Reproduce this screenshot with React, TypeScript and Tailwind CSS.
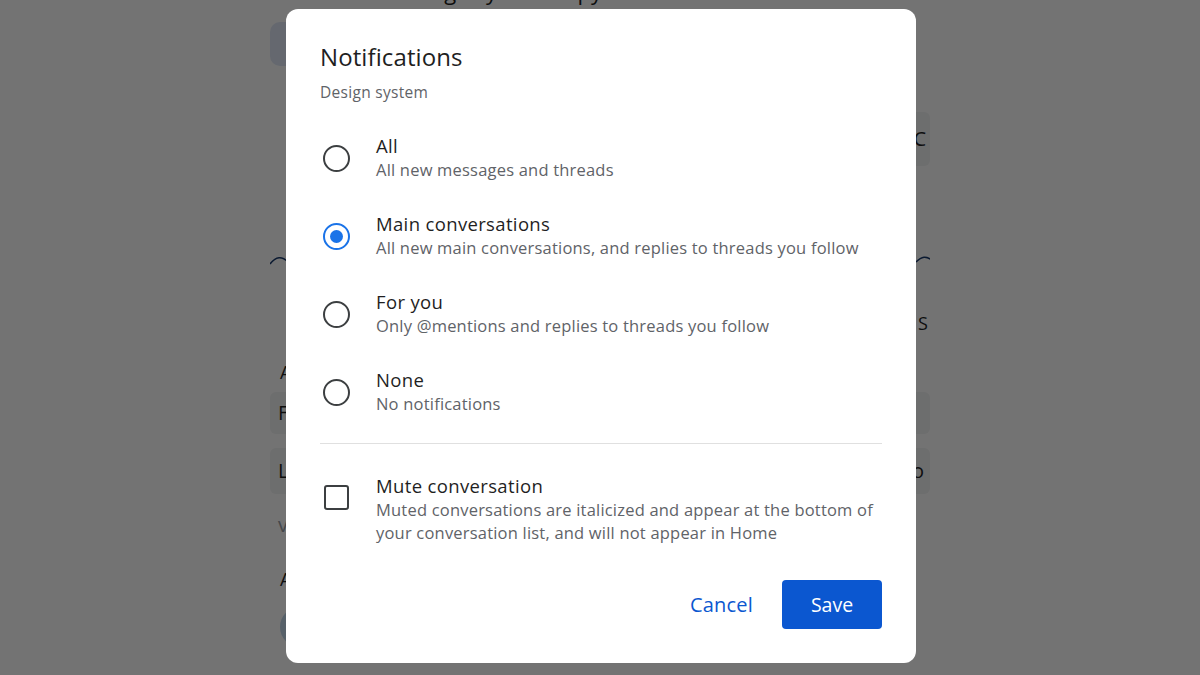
import React from "react";

const font = { fontFamily: '"Open Sans", "Noto Sans", sans-serif' };

function Radio({ checked }: { checked?: boolean }) {
  return (
    <div className="w-[32px] flex justify-center shrink-0">
      {checked ? (
        <div className="w-[27px] h-[27px] rounded-full border-[2.5px] border-[#1a73e8] flex items-center justify-center">
          <div className="w-[13px] h-[13px] rounded-full bg-[#1a73e8]" />
        </div>
      ) : (
        <div className="w-[27px] h-[27px] rounded-full border-[2.5px] border-[#3c3f41]" />
      )}
    </div>
  );
}

function Option({ label, desc, checked }: { label: string; desc: string; checked?: boolean }) {
  return (
    <div className="flex items-center gap-[24px]">
      <Radio checked={checked} />
      <div className="flex flex-col">
        <div className="text-[18.5px] leading-[24px] text-[#1f1f1f] tracking-[0.35px]">{label}</div>
        <div className="text-[16.5px] leading-[24px] text-[#5f6368] tracking-[0.2px]">{desc}</div>
      </div>
    </div>
  );
}

function Background() {
  return (
    <div className="mx-auto w-[660px] h-[675px] flex flex-col text-[#1f1f1f] text-[20px]" style={font}>
      <div className="-mt-[22px] h-[26px] pl-[130px] text-[22px] leading-[26px]">Design system copy</div>
      <div className="mt-[18px] flex justify-between">
        <div className="w-[120px] h-[44px] rounded-[10px] bg-[#dfe7f6]" />
      </div>
      <div className="mt-[46px] flex justify-end">
        <div className="w-[140px] h-[54px] bg-[#f1f3f4] rounded-[6px] flex items-center justify-end pr-[4px] text-[20px]">C</div>
      </div>
      <div className="mt-[88px]">
        <svg width="660" height="16" viewBox="0 0 660 16">
          <path d="M0 10 C 6 2, 12 2, 18 8 M646 8 C 652 2, 656 2, 662 6" stroke="#1a3a6e" strokeWidth="1.5" fill="none" />
        </svg>
      </div>
      <div className="mt-[40px] flex justify-end pr-[2px] text-[18px]">, S</div>
      <div className="mt-[22px] pl-[10px] text-[18px]">A</div>
      <div className="mt-[6px] h-[42px] rounded-[6px] bg-[#f1f3f4] flex items-center pl-[8px]">F</div>
      <div className="mt-[14px] h-[46px] rounded-[6px] bg-[#f1f3f4] flex items-center justify-between pl-[8px] pr-[6px]">
        <span>L</span>
        <span>o</span>
      </div>
      <div className="mt-[16px] pl-[8px] text-[#9aa0a6]">v</div>
      <div className="mt-[26px] pl-[10px] text-[18px]">A</div>
      <div className="mt-[14px] pl-[10px]">
        <div className="w-[40px] h-[40px] rounded-full bg-[#c2d7e8]" />
      </div>
    </div>
  );
}

export default function App() {
  return (
    <div className="relative w-[1200px] h-[675px] overflow-hidden bg-white" style={font}>
      <Background />
      <div className="absolute inset-0 bg-black/[0.55]" />
      <div className="absolute left-[286px] top-[9px] w-[630px] h-[654px] bg-white rounded-[12px] px-[34px] pt-[32px] flex flex-col">
        <div className="text-[24px] leading-[32px] text-[#1f1f1f] tracking-[0.1px]">Notifications</div>
        <div className="mt-[9px] text-[15.5px] leading-[20px] text-[#5f6368] tracking-[0.3px]">Design system</div>
        <div className="mt-[32px] flex flex-col gap-[30px]">
          <Option label="All" desc="All new messages and threads" />
          <Option label="Main conversations" desc="All new main conversations, and replies to threads you follow" checked />
          <Option label="For you" desc="Only @mentions and replies to threads you follow" />
          <Option label="None" desc="No notifications" />
        </div>
        <div className="mt-[27px] h-[1px] bg-[#e0e0e0]" />
        <div className="mt-[30px] flex items-start gap-[24px]">
          <div className="w-[32px] flex justify-center shrink-0 pt-[11px]">
            <div className="w-[25px] h-[25px] rounded-[3px] border-[2.5px] border-[#3c3f41]" />
          </div>
          <div className="flex flex-col">
            <div className="text-[18.5px] leading-[24px] text-[#1f1f1f] tracking-[0.35px]">Mute conversation</div>
            <div className="text-[16.5px] leading-[23px] text-[#5f6368] tracking-[0.2px]">
              Muted conversations are italicized and appear at the bottom of
              <br />
              your conversation list, and will not appear in Home
            </div>
          </div>
        </div>
        <div className="mt-[36px] flex justify-end items-center gap-[17px]">
          <button className="h-[49px] px-[12px] text-[20px] font-medium text-[#0b57d0] tracking-[0.2px]">Cancel</button>
          <button className="w-[100px] h-[49px] rounded-[4px] bg-[#0b57d0] text-white text-[19.5px] font-medium">Save</button>
        </div>
      </div>
    </div>
  );
}
